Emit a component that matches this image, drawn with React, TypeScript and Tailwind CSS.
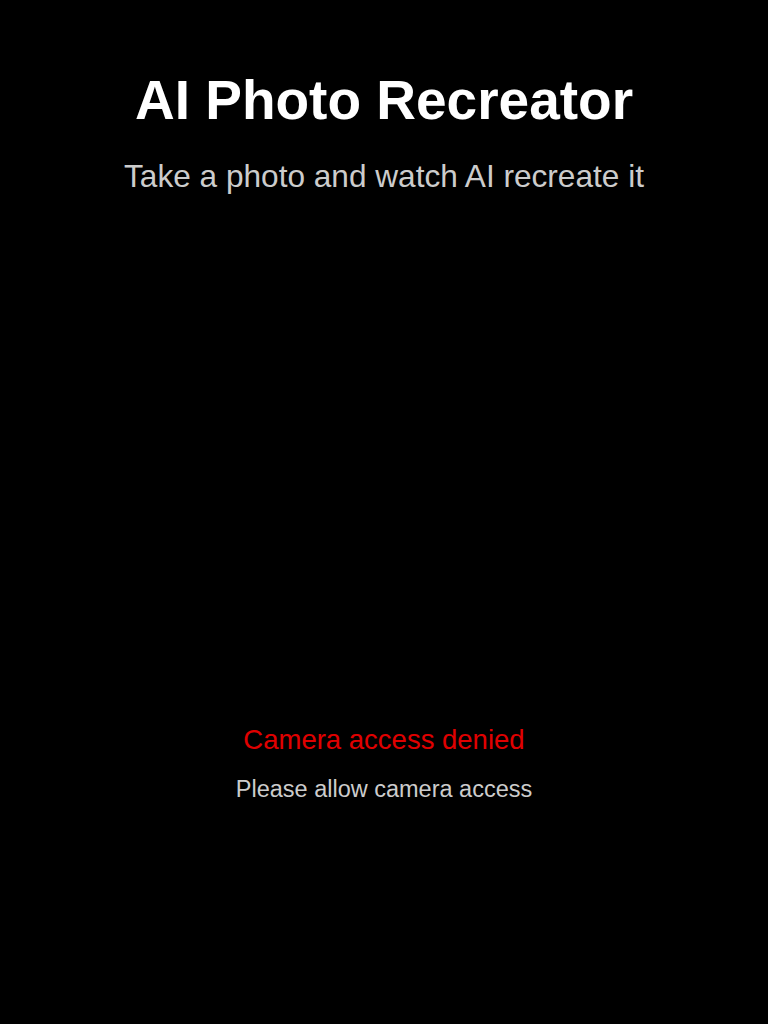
import React from 'react';

export default function App() {
  return (
    <div className="min-h-screen bg-black text-white flex flex-col items-center px-6 pt-[67px]" style={{ fontFamily: '"Liberation Sans", Arial, sans-serif' }}>
      <h1 className="text-[55px] leading-[1.2] font-bold">AI Photo Recreator</h1>
      <p className="mt-[25px] text-[31.6px] leading-[1.2] text-[#cccccc]">Take a photo and watch AI recreate it</p>

      <div className="w-full flex flex-col items-center pt-[527px]">
        <p className="text-[27.5px] leading-[1.2] text-[#e00000]">Camera access denied</p>
        <p className="mt-[19px] text-[23.5px] leading-[1.2] text-[#cccccc]">Please allow camera access</p>
      </div>
    </div>
  );
}
